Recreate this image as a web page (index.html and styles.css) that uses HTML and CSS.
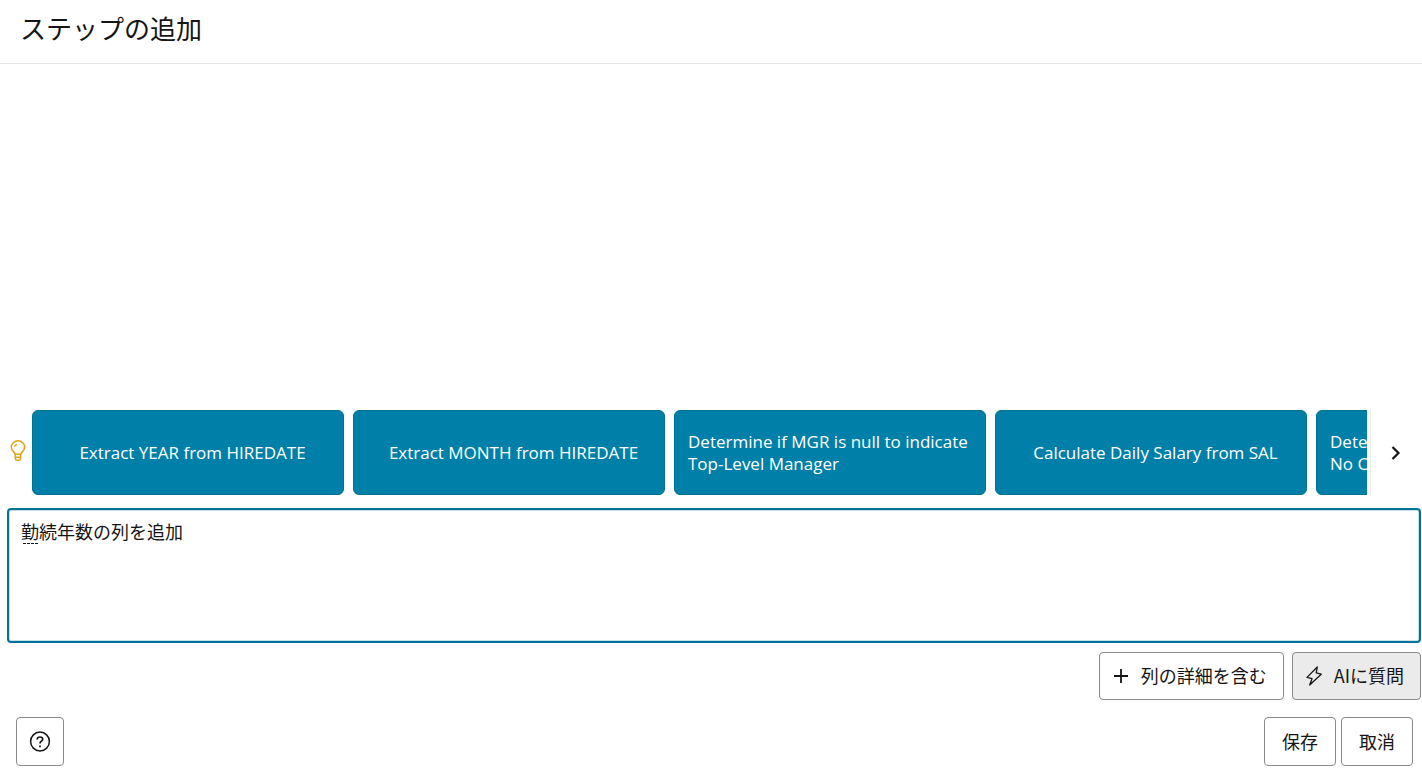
FILE: index.html
```html
<!DOCTYPE html>
<html lang="ja">
<head>
<meta charset="utf-8">
<title>ステップの追加</title>
<meta name="viewport" content="width=device-width, initial-scale=1">
<link rel="stylesheet" href="styles.css">
</head>
<body>
<div class="dialog">
  <header class="dialog-header">
    <h1 class="dialog-title">ステップの追加</h1>
  </header>
  <main class="dialog-body">
    <section class="suggestions" aria-label="提案">
      <svg class="bulb" viewBox="0 0 16 22" fill="none" stroke="#dfa11b" stroke-width="1.5" aria-hidden="true">
        <path d="M5.3 14.3C5.1 12.2 1.3 11 1.3 7.3a6.7 6.5 0 0 1 13.4 0C14.7 11 10.9 12.2 10.7 14.3Z"/>
        <path d="M5.3 14.3v4.2q0 1.7 1.7 1.7h2q1.7 0 1.7-1.7v-4.2M5.3 17.3h5.4"/>
        <path d="M4.7 7q.2-2 2.2-2.6" stroke-width="1.3"/>
      </svg>
      <div class="cards">
        <button class="card" type="button"><span>Extract YEAR from HIREDATE</span></button>
        <button class="card" type="button"><span>Extract MONTH from HIREDATE</span></button>
        <button class="card card-long" type="button"><span>Determine if MGR is null to indicate Top-Level Manager</span></button>
        <button class="card" type="button"><span>Calculate Daily Salary from SAL</span></button>
        <button class="card card-long" type="button"><span>Determine if COMM is null for<br>No Commission</span></button>
      </div>
      <button class="next" type="button" aria-label="次へ">
        <svg width="10" height="16" viewBox="0 0 10 16" fill="none" stroke="#161513" stroke-width="2.2" aria-hidden="true"><path d="M1.5 2l6 6-6 6"/></svg>
      </button>
    </section>
    <div class="prompt">
      <textarea class="prompt-input" aria-label="質問" spellcheck="false">勤続年数の列を追加</textarea>
      <span class="spelling" aria-hidden="true"></span>
    </div>
    <div class="actions">
      <button class="btn btn-icon" type="button">
        <svg width="16" height="16" viewBox="0 0 16 16" fill="none" stroke="#161513" stroke-width="1.8" aria-hidden="true"><path d="M8 1v14M1 8h14"/></svg>
        <span class="label">列の詳細を含む</span>
      </button>
      <button class="btn btn-icon btn-active" type="button">
        <svg width="16" height="20" viewBox="0 0 16 20" fill="none" stroke="#161513" stroke-width="1.3" stroke-linejoin="round" aria-hidden="true"><path d="M11.3 1L1 11.4l5 1.3L3.7 19 15.2 8.2l-5-1.3Z"/></svg>
        <span class="label">AIに質問</span>
      </button>
    </div>
  </main>
  <footer class="dialog-footer">
    <button class="btn btn-help" type="button" aria-label="ヘルプ">
      <svg width="22" height="22" viewBox="0 0 22 22" fill="none" stroke="#161513" stroke-width="1.5" aria-hidden="true">
        <circle cx="11" cy="10.5" r="9.4"/>
        <path d="M8.2 8.5V8.2q.2-2.2 2.8-2.2 2.7 0 2.7 2.2 0 1.2-1.4 2-1.3.8-1.3 2.3" stroke-width="1.7"/>
        <path d="M11 14.4v1.8" stroke-width="1.8"/>
      </svg>
    </button>
    <div class="footer-actions">
      <button class="btn" type="button"><span class="label">保存</span></button>
      <button class="btn" type="button"><span class="label">取消</span></button>
    </div>
  </footer>
</div>
</body>
</html>
```
FILE: styles.css
```css
* { box-sizing: border-box; }

body {
  margin: 0;
  background: #fff;
  color: #161513;
  font-family: "Noto Sans CJK JP", sans-serif;
  font-size: 18px;
}

button, textarea { font: inherit; color: inherit; }

.dialog {
  display: flex;
  flex-direction: column;
  min-height: 100vh;
}

.dialog-header {
  padding: 8px 20px 15px;
  border-bottom: 1px solid #e4e4e4;
}

.dialog-title {
  margin: 0;
  font-size: 26px;
  font-weight: 400;
  line-height: 40px;
}

.dialog-body {
  flex: 1;
  display: flex;
  flex-direction: column;
  justify-content: flex-end;
}

.suggestions {
  display: flex;
  align-items: center;
  padding-left: 10px;
}

.bulb {
  flex: none;
  width: 16px;
  height: 22px;
  margin-right: 6px;
  margin-bottom: 4px;
}

.cards {
  flex: 1;
  min-width: 0;
  display: flex;
  gap: 9px;
  overflow: hidden;
}

.card {
  flex: none;
  display: flex;
  align-items: center;
  justify-content: center;
  width: 312px;
  height: 85px;
  padding: 0 4px 0 13px;
  border: 1px solid #00718f;
  border-radius: 6px;
  background: #007fa9;
  color: #fff;
  font-family: "Open Sans", "Noto Sans", sans-serif;
  font-size: 17px;
  line-height: 22px;
  text-align: left;
}

.card-long span { flex: 1; }

.next {
  display: flex;
  align-items: center;
  justify-content: center;
  width: 52px;
  height: 85px;
  margin-left: 3px;
  padding: 0 1px 0 0;
  border: 0;
  border-left: 1px solid #ececec;
  background: #fff;
}

.prompt {
  position: relative;
  margin: 13px 1px 0 7px;
}

.prompt-input {
  display: block;
  width: 100%;
  height: 135px;
  padding: 8px 12px;
  border: 2px solid #007196;
  border-radius: 4px;
  background: #fff;
  box-shadow: inset 0 0 0 1px #c4e0ea;
  line-height: 26px;
  outline: 0;
  resize: none;
}

.spelling {
  position: absolute;
  left: 16px;
  top: 35px;
  width: 15px;
  height: 1px;
  background: repeating-linear-gradient(90deg, #161513 0 3px, transparent 3px 4px);
}

.actions {
  display: flex;
  justify-content: flex-end;
  gap: 8px;
  padding: 9px 1px 0 0;
}

.btn {
  display: flex;
  align-items: center;
  justify-content: center;
  height: 48px;
  padding: 0 17px;
  border: 1px solid #8b8988;
  border-radius: 4px;
  background: #fff;
  line-height: 26px;
}

.label { padding-bottom: 2px; }

.btn-icon {
  gap: 12px;
  padding: 0 16px 0 13px;
}

.btn-active { background: #ebebeb; }

.dialog-footer {
  display: flex;
  align-items: center;
  justify-content: space-between;
  padding: 17px 9px 7px 16px;
}

.dialog-footer .btn { height: 49px; }

.btn-help {
  width: 48px;
  padding: 0;
}

.footer-actions {
  display: flex;
  gap: 5px;
}
```
